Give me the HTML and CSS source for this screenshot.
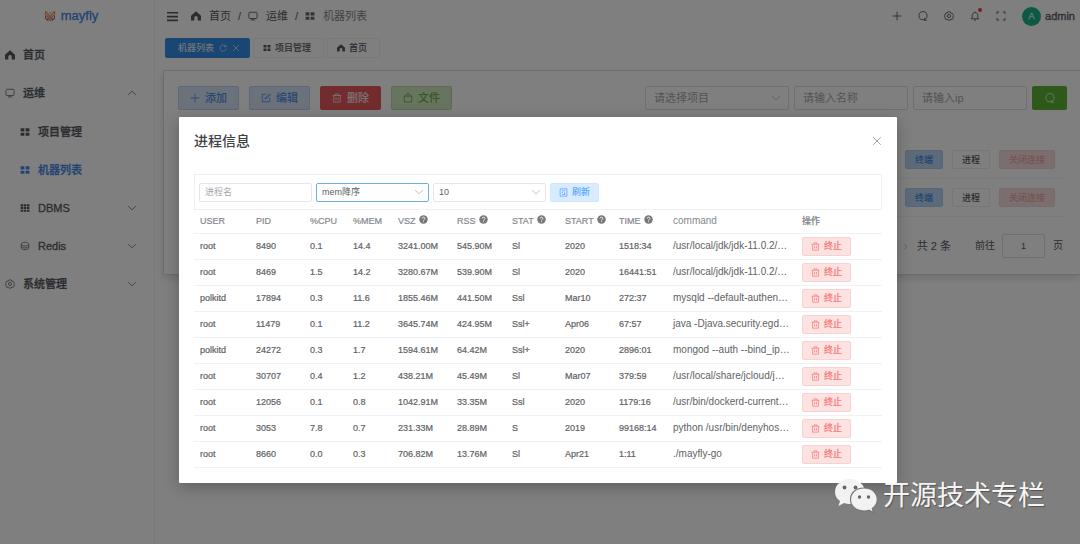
FILE: index.html
```html
<!DOCTYPE html>
<html lang="zh-CN">
<head>
<meta charset="utf-8">
<meta name="viewport" content="width=device-width, initial-scale=1">
<title>mayfly</title>
<link rel="stylesheet" href="styles.css">
</head>
<body>
<svg class="defs" aria-hidden="true">
  <symbol id="home" viewBox="0 0 16 16"><path fill="currentColor" d="M8 .5 0 7.500V15h5.300v-4.500a2.700 2.700 0 0 1 5.400 0V15H16V7.500z"/></symbol>
  <symbol id="monitor" viewBox="0 0 16 16"><path class="ln" d="M3 2h10q1.500 0 1.500 1.500v7q0 1.500-1.500 1.500H3q-1.500 0-1.500-1.500v-7Q1.500 2 3 2zM8 12v2M4.500 14.300h7"/></symbol>
  <symbol id="grid" viewBox="0 0 16 16"><path fill="currentColor" d="M1 2h6v5H1zM9 2h6v5H9zM1 9h6v5H1zM9 9h6v5H9z"/></symbol>
  <symbol id="table" viewBox="0 0 16 16"><path fill="currentColor" d="M1 2h4v3H1zM6 2h4v3H6zM11 2h4v3h-4zM1 6h4v4H1zM6 6h4v4H6zM11 6h4v4h-4zM1 11h4v3H1zM6 11h4v3H6zM11 11h4v3h-4z"/></symbol>
  <symbol id="coin" viewBox="0 0 16 16"><path class="ln" d="M2 5c0-4 12-4 12 0s-12 4-12 0v6c0 4 12 4 12 0V5M2 8.500c0 3.500 12 3.500 12 0"/></symbol>
  <symbol id="gear" viewBox="0 0 16 16"><path class="ln" d="M6 1.500h4l1 2 2.200.2 2 3.300-1.200 1 1.200 2-2 3.300-2.200-.3-1 1.500H6l-1-1.500-2.200.3L.8 10 2 8 .8 6.500l2-3L5 3.500z"/><circle class="ln" cx="8" cy="8" r="2.500"/></symbol>
  <symbol id="down" viewBox="0 0 16 16"><path class="ln" d="m2 5 6 6 6-6"/></symbol>
  <symbol id="up" viewBox="0 0 16 16"><path class="ln" d="m2 11 6-6 6 6"/></symbol>
  <symbol id="right" viewBox="0 0 16 16"><path class="ln" d="m5 2 6 6-6 6"/></symbol>
  <symbol id="menu" viewBox="0 0 16 16"><path fill="currentColor" d="M0 1.500h16v2.300H0zM0 7h16v2.300H0zM0 12.500h16v2.300H0z"/></symbol>
  <symbol id="plus" viewBox="0 0 16 16"><path class="ln" d="M8 1v14M1 8h14"/></symbol>
  <symbol id="close" viewBox="0 0 16 16"><path class="ln" d="m2 2 12 12M14 2 2 14"/></symbol>
  <symbol id="search" viewBox="0 0 16 16"><circle class="ln" cx="8" cy="7.500" r="6.500"/><path class="ln" d="M10.500 11.500v3.500H14"/></symbol>
  <symbol id="bell" viewBox="0 0 16 16"><path class="ln" d="M1.500 12.500h13M3.500 12.500V7c0-6 9-6 9 0v5.500M6.500 14.500h3M8 1v1.500"/></symbol>
  <symbol id="full" viewBox="0 0 16 16"><path class="ln" d="M1.500 5V1.500H5M11 1.500h3.500V5M14.500 11v3.500H11M5 14.500H1.500V11"/></symbol>
  <symbol id="refresh" viewBox="0 0 16 16"><path class="ln" d="M13.500 5A6.300 6.300 0 1 0 14.300 9M14 1.500V5.500h-4"/></symbol>
  <symbol id="edit" viewBox="0 0 16 16"><path class="ln" d="M8 2H2v12h12V8M6.500 9.500l.5-2 6.500-6 1.500 1.500-6.500 6z"/></symbol>
  <symbol id="trash" viewBox="0 0 16 16"><path class="ln" d="M1 4h14M5.500 4V1.500h5V4M2.800 4v10.500h10.400V4M6.300 7v4.500M9.700 7v4.500"/></symbol>
  <symbol id="folder" viewBox="0 0 16 16"><path class="ln" d="M1.500 5h13l-1 9.500h-11zM4 5l2-3.500h4L12 5"/></symbol>
  <symbol id="doc" viewBox="0 0 16 16"><path class="ln" d="M2 1.500h12v13H2zM5 5h6M5 8h2M10 7.500v4M5 11.500h6"/></symbol>
  <symbol id="help" viewBox="0 0 16 16"><circle cx="8" cy="8" r="7.500" fill="currentColor"/><path d="M5.500 6.300c0-3.300 5-3.300 5 0C10.500 8 8 8 8 10M8 11.300v1.500" fill="none" stroke="#fff" stroke-width="1.500"/></symbol>
</svg>

<div class="app">
  <aside class="sidebar">
    <a class="logo" href="#"><svg viewBox="0 0 16 16"><path d="M2 1.500 8 9l6-7.500M2 1.500v5L5.500 9M14 1.500v5L10.500 9" fill="none" stroke="#f08a5d" stroke-width="1.600"/><path d="M2 8v3l3.500 3M14 8v3l-3.500 3M8 9v6M5.500 9v5M10.500 9v5M8 3v2" fill="none" stroke="#b2654e" stroke-width="1.400"/></svg>mayfly</a>
    <nav class="nav">
      <a href="#"><svg><use href="#home"/></svg>首页</a>
      <a href="#"><svg class="soft"><use href="#monitor"/></svg>运维<svg class="arrow"><use href="#up"/></svg></a>
      <div class="sub">
        <a href="#"><svg><use href="#grid"/></svg>项目管理</a>
        <a href="#" class="current"><svg><use href="#grid"/></svg>机器列表</a>
        <a href="#"><svg><use href="#table"/></svg>DBMS<svg class="arrow"><use href="#down"/></svg></a>
        <a href="#"><svg class="soft"><use href="#coin"/></svg>Redis<svg class="arrow"><use href="#down"/></svg></a>
      </div>
      <a href="#"><svg class="soft"><use href="#gear"/></svg>系统管理<svg class="arrow"><use href="#down"/></svg></a>
    </nav>
  </aside>

  <div class="page">
    <header class="topbar">
      <button class="icon" aria-label="折叠菜单"><svg><use href="#menu"/></svg></button>
      <nav class="crumbs">
        <a href="#"><svg><use href="#home"/></svg>首页</a><span>/</span>
        <a href="#"><svg><use href="#monitor"/></svg>运维</a><span>/</span>
        <a href="#" class="last"><svg><use href="#grid"/></svg>机器列表</a>
      </nav>
      <div class="tools">
        <button class="icon" aria-label="新增"><svg><use href="#plus"/></svg></button>
        <button class="icon" aria-label="搜索"><svg><use href="#search"/></svg></button>
        <button class="icon" aria-label="设置"><svg><use href="#gear"/></svg></button>
        <button class="icon bell" aria-label="消息"><svg><use href="#bell"/></svg><i></i></button>
        <button class="icon" aria-label="全屏"><svg><use href="#full"/></svg></button>
        <a class="user" href="#"><span class="avatar">A</span>admin</a>
      </div>
    </header>
    <nav class="tabs">
      <a href="#" class="active">机器列表<svg><use href="#refresh"/></svg><svg><use href="#close"/></svg></a>
      <a href="#"><svg><use href="#grid"/></svg>项目管理</a>
      <a href="#"><svg><use href="#home"/></svg>首页</a>
    </nav>
    <main class="card">
      <div class="bar">
        <div class="actions">
          <button class="btn blue"><svg><use href="#plus"/></svg>添加</button>
          <button class="btn blue"><svg><use href="#edit"/></svg>编辑</button>
          <button class="btn red"><svg><use href="#trash"/></svg>删除</button>
          <button class="btn green"><svg><use href="#folder"/></svg>文件</button>
        </div>
        <div class="search">
          <span class="select wide"><select class="empty" aria-label="项目"><option>请选择项目</option></select><svg><use href="#down"/></svg></span>
          <input class="field" aria-label="名称" placeholder="请输入名称">
          <input class="field" aria-label="ip" placeholder="请输入ip">
          <button class="go" aria-label="查询"><svg><use href="#search"/></svg></button>
        </div>
      </div>
      <div class="machines">
        <div class="machine"><button class="mini term">终端</button><button class="mini">进程</button><button class="mini shut" disabled>关闭连接</button></div>
        <div class="machine"><button class="mini term">终端</button><button class="mini">进程</button><button class="mini shut" disabled>关闭连接</button></div>
      </div>
      <div class="pager">
        <button class="icon next" aria-label="下一页"><svg><use href="#right"/></svg></button>
        <span class="total">共 2 条</span>
        <label for="pageno">前往</label><input id="pageno" value="1"><span>页</span>
      </div>
    </main>
  </div>
</div>

<div class="overlay">
  <section class="dialog" role="dialog" aria-labelledby="dlg-title">
    <header class="dialog-head"><h1 id="dlg-title">进程信息</h1><button class="icon" aria-label="关闭"><svg><use href="#close"/></svg></button></header>
    <form class="filters">
      <input class="field" aria-label="进程名" placeholder="进程名">
      <span class="select focus"><select aria-label="排序"><option>mem降序</option></select><svg><use href="#down"/></svg></span>
      <span class="select"><select aria-label="数量"><option>10</option></select><svg><use href="#down"/></svg></span>
      <button type="button" class="mini reload"><svg><use href="#doc"/></svg>刷新</button>
    </form>
    <table class="procs">
      <colgroup><col class="w56"><col class="w54"><col class="w43"><col class="w45"><col class="w59"><col class="w55"><col class="w53"><col class="w54"><col class="w54"><col><col class="w86"></colgroup>
      <thead><tr><th>USER</th><th>PID</th><th>%CPU</th><th>%MEM</th><th>VSZ<svg><use href="#help"/></svg></th><th>RSS<svg><use href="#help"/></svg></th><th>STAT<svg><use href="#help"/></svg></th><th>START<svg><use href="#help"/></svg></th><th>TIME<svg><use href="#help"/></svg></th><th class="cmd">command</th><th>操作</th></tr></thead>
      <tbody>
        <tr><td>root</td><td>8490</td><td>0.1</td><td>14.4</td><td>3241.00M</td><td>545.90M</td><td>Sl</td><td>2020</td><td>1518:34</td><td class="cmd">/usr/local/jdk/jdk-11.0.2/…</td><td><button class="mini kill"><svg><use href="#trash"/></svg>终止</button></td></tr>
        <tr><td>root</td><td>8469</td><td>1.5</td><td>14.2</td><td>3280.67M</td><td>539.90M</td><td>Sl</td><td>2020</td><td>16441:51</td><td class="cmd">/usr/local/jdk/jdk-11.0.2/…</td><td><button class="mini kill"><svg><use href="#trash"/></svg>终止</button></td></tr>
        <tr><td>polkitd</td><td>17894</td><td>0.3</td><td>11.6</td><td>1855.46M</td><td>441.50M</td><td>Ssl</td><td>Mar10</td><td>272:37</td><td class="cmd">mysqld --default-authen…</td><td><button class="mini kill"><svg><use href="#trash"/></svg>终止</button></td></tr>
        <tr><td>root</td><td>11479</td><td>0.1</td><td>11.2</td><td>3645.74M</td><td>424.95M</td><td>Ssl+</td><td>Apr06</td><td>67:57</td><td class="cmd">java -Djava.security.egd…</td><td><button class="mini kill"><svg><use href="#trash"/></svg>终止</button></td></tr>
        <tr><td>polkitd</td><td>24272</td><td>0.3</td><td>1.7</td><td>1594.61M</td><td>64.42M</td><td>Ssl+</td><td>2020</td><td>2896:01</td><td class="cmd">mongod --auth --bind_ip…</td><td><button class="mini kill"><svg><use href="#trash"/></svg>终止</button></td></tr>
        <tr><td>root</td><td>30707</td><td>0.4</td><td>1.2</td><td>438.21M</td><td>45.49M</td><td>Sl</td><td>Mar07</td><td>379:59</td><td class="cmd">/usr/local/share/jcloud/j…</td><td><button class="mini kill"><svg><use href="#trash"/></svg>终止</button></td></tr>
        <tr><td>root</td><td>12056</td><td>0.1</td><td>0.8</td><td>1042.91M</td><td>33.35M</td><td>Ssl</td><td>2020</td><td>1179:16</td><td class="cmd">/usr/bin/dockerd-current…</td><td><button class="mini kill"><svg><use href="#trash"/></svg>终止</button></td></tr>
        <tr><td>root</td><td>3053</td><td>7.8</td><td>0.7</td><td>231.33M</td><td>28.89M</td><td>S</td><td>2019</td><td>99168:14</td><td class="cmd">python /usr/bin/denyhos…</td><td><button class="mini kill"><svg><use href="#trash"/></svg>终止</button></td></tr>
        <tr><td>root</td><td>8660</td><td>0.0</td><td>0.3</td><td>706.82M</td><td>13.76M</td><td>Sl</td><td>Apr21</td><td>1:11</td><td class="cmd">./mayfly-go</td><td><button class="mini kill"><svg><use href="#trash"/></svg>终止</button></td></tr>
      </tbody>
    </table>
  </section>
</div>

<div class="watermark">
  <svg viewBox="0 0 44 36"><path fill="#f2f2f2" d="M16 1C7 1 1 7 1 14c0 4 2 7 5 9l-1.500 5 5.500-3c2 .6 4 1 6 1 8 0 15-5 15-12S24 1 16 1z"/><path fill="#f2f2f2" stroke="#777" stroke-width="1.200" d="M30 10c-8 0-13.500 5-13.500 11.500S22 33 30 33c2 0 3.500-.3 5-.8l4.500 2.600-1.200-4.300c3-2 5-5 5-9C43.300 15 38 10 30 10z"/><g fill="#666"><circle cx="10.500" cy="9.500" r="1.900"/><circle cx="21.500" cy="9.500" r="1.900"/><circle cx="25.500" cy="19" r="1.700"/><circle cx="34.500" cy="19" r="1.700"/></g></svg>
  <span>开源技术专栏</span>
</div>
</body>
</html>
```

FILE: styles.css
```css
* { box-sizing: border-box; }
body {
  margin: 0;
  min-height: 100vh;
  overflow: hidden;
  background: #fff;
  color: #55585e;
  font: 11px/16px "Liberation Sans", "Noto Sans CJK SC", sans-serif;
}
button, input, select { font: inherit; color: inherit; margin: 0; }
button { cursor: pointer; }
a { color: inherit; text-decoration: none; }
svg { width: 10px; height: 10px; flex: none; }
.ln { fill: none; stroke: currentColor; stroke-width: 1.4; }
.defs { position: absolute; width: 0; height: 0; }
.icon { display: flex; padding: 0; border: 0; background: none; }

.app { display: flex; min-height: 100vh; }
.sidebar { width: 155px; flex: none; border-right: 1px solid #f0f0f0; }
.logo {
  display: flex; align-items: center; justify-content: center; gap: 5px;
  height: 32px; padding-right: 12px; font-size: 13px; color: #3f86e6; -webkit-text-stroke: 0.3px;
}
.logo svg { width: 12px; height: 12px; }
.nav { padding-top: 4px; font-weight: 500; }
.nav a { display: flex; align-items: center; gap: 8px; height: 38px; padding: 0 17px 0 5px; -webkit-text-stroke: 0.3px; }
.nav .sub { padding-top: 1px; }
.nav .sub a { padding-left: 20px; }
.nav .current { color: #3f86e6; }
.nav .arrow { margin-left: auto; color: #777; }
.soft { color: #707276; }

.page { flex: 1; min-width: 0; display: flex; flex-direction: column; }
.topbar { display: flex; align-items: center; height: 32px; padding: 0 5px 0 12px; }
.topbar > .icon svg { width: 11px; height: 11px; }
.crumbs { display: flex; align-items: center; gap: 7px; margin-left: 13px; }
.crumbs a { display: flex; align-items: center; gap: 8px; }
.crumbs .last { color: #84868a; }
.crumbs .last svg { color: #66686c; }
.tools { display: flex; align-items: center; gap: 16px; margin-left: auto; }
.bell { position: relative; }
.bell i { position: absolute; top: -3px; right: -2px; width: 4px; height: 4px; border-radius: 50%; background: #e84040; }
.user { display: flex; align-items: center; gap: 4px; -webkit-text-stroke: 0.3px; }
.avatar { width: 19px; height: 19px; border-radius: 50%; background: #18b48a; color: #d8e8e4; font-size: 9px; line-height: 19px; text-align: center; }

.tabs { display: flex; gap: 3px; padding: 6px 10px 12px; font-size: 9px; font-weight: 500; }
.tabs a { display: flex; align-items: center; gap: 4px; height: 20px; padding: 0 12px 0 9px; border: 1px solid #f2f2f2; border-radius: 2px; }
.tabs svg { width: 8px; height: 8px; }
.tabs .active { padding: 0 9px 0 12px; gap: 5px; background: #348ce8; border-color: #348ce8; color: #dfeaf5; }

.card { margin-left: 8px; border: 1px solid #dcdcdc; border-right: 0; padding: 15px 13px 16px 14px; box-shadow: 0 3px 8px #0002; }
.bar { display: flex; justify-content: space-between; gap: 10px; }
.actions { display: flex; gap: 10px; }
.btn { display: flex; align-items: center; justify-content: center; gap: 5px; width: 61px; height: 24px; padding: 0; border: 1px solid; border-radius: 2px; font-weight: 500; }
.blue { background: #d6e4f6; border-color: #bcd3f0; color: #4b90e2; }
.red { background: #e6585c; border-color: #e6585c; color: #f6e4e4; }
.green { background: #cfe8c0; border-color: #b6d9a2; color: #66b040; }
.search { display: flex; gap: 5px; }
.field, .select select { width: 114px; height: 24px; padding: 0 8px; border: 1px solid #dcdfe6; border-radius: 2px; background: #fff; outline: 0; }
.field::placeholder { color: #a4a7ad; opacity: 1; }
.select { display: flex; position: relative; }
.select select { width: 100%; appearance: none; }
.select .empty { color: #a4a7ad; }
.select svg { position: absolute; right: 8px; top: 50%; margin-top: -5px; color: #b4b7bd; pointer-events: none; }
.wide { width: 144px; }
.go { display: flex; align-items: center; justify-content: center; width: 35px; height: 24px; padding: 0; border: 0; border-radius: 2px; background: #5cb234; color: #e0f0d8; }

.machines { padding-top: 31px; }
.machine { display: flex; justify-content: flex-end; align-items: center; gap: 9px; height: 38px; padding-right: 12px; border-bottom: 1px solid #f5f5f5; }
.mini { display: inline-flex; align-items: center; justify-content: center; gap: 4px; height: 19px; padding: 0 9px; border: 1px solid #ececec; border-radius: 2px; background: #fff; font-size: 9px; line-height: 12px; font-weight: 500; }
.mini svg { width: 9px; height: 9px; }
.term { background: #bad5f4; border-color: #acccf0; color: #3c8ae4; }
.shut { background: #f4dcdc; border-color: #f0d6d6; color: #eca6a6; }
.pager { display: flex; align-items: center; justify-content: flex-end; padding-top: 17px; padding-right: 4px; font-size: 10px; }
.pager .next svg { width: 7px; height: 7px; color: #999; }
.pager .total { margin: 0 24px 0 8px; font-size: 11px; }
.pager input { width: 43px; height: 24px; margin: 0 8px 0 7px; padding: 0; border: 1px solid #dcdfe6; border-radius: 2px; background: #fff; text-align: center; font-size: 9px; }

.overlay { position: absolute; inset: 0; padding: 117px 183px 0 179px; background: rgba(0, 0, 0, .5); }
.dialog { padding: 15px; background: #fff; border-radius: 1px; box-shadow: 0 4px 16px rgba(0, 0, 0, .25); color: #606266; }
.dialog-head { display: flex; align-items: center; justify-content: space-between; height: 18px; color: #909399; }
.dialog-head h1 { margin: 0; font-size: 14px; line-height: 18px; font-weight: 500; color: #404246; }
.dialog-head svg { color: #909399; }
.filters { display: flex; align-items: center; gap: 4px; height: 36px; margin: 24px 0 0; padding: 0 4px; border: 1px solid #f0f0f0; font-size: 9px; }
.filters .field, .filters .select { width: 113px; }
.filters .field, .filters select { height: 19px; padding: 0 5px; }
.filters .field, .filters select { border-color: #e4e7ed; }
.filters .select svg { right: 5px; }
.filters .focus select { border-color: #6cb2e0; }
.reload { padding: 0 8px; background: #d9ecff; border-color: #d0e6fd; color: #55a8fb; }
.procs { width: 100%; table-layout: fixed; border-collapse: collapse; font-size: 9px; line-height: 12px; }
.procs th, .procs td { height: 26px; padding: 0 0 0 6px; border-bottom: 1px solid #f0f1f4; text-align: left; white-space: nowrap; vertical-align: middle; -webkit-text-stroke: 0.2px; }
.procs th { height: 23px; color: #85888e; font-weight: 500; }
.procs th svg { margin-left: 3px; width: 9px; height: 9px; color: #777; }
.procs .cmd { font-size: 10px; -webkit-text-stroke: 0; }
.procs .mini { vertical-align: middle; }
.kill { padding: 0 8px; background: #fde2e2; border-color: #fbd0d0; color: #f58080; }
.w43 { width: 43px; }
.w45 { width: 45px; }
.w53 { width: 53px; }
.w54 { width: 54px; }
.w55 { width: 55px; }
.w56 { width: 56px; }
.w59 { width: 59px; }
.w86 { width: 86px; }

.watermark { position: absolute; right: 35px; bottom: 28px; display: flex; align-items: center; gap: 5px; color: #f4f4f4; font-size: 27px; line-height: 40px; text-shadow: 1px 1px 1px #555; }
.watermark svg { width: 44px; height: 36px; }
```
